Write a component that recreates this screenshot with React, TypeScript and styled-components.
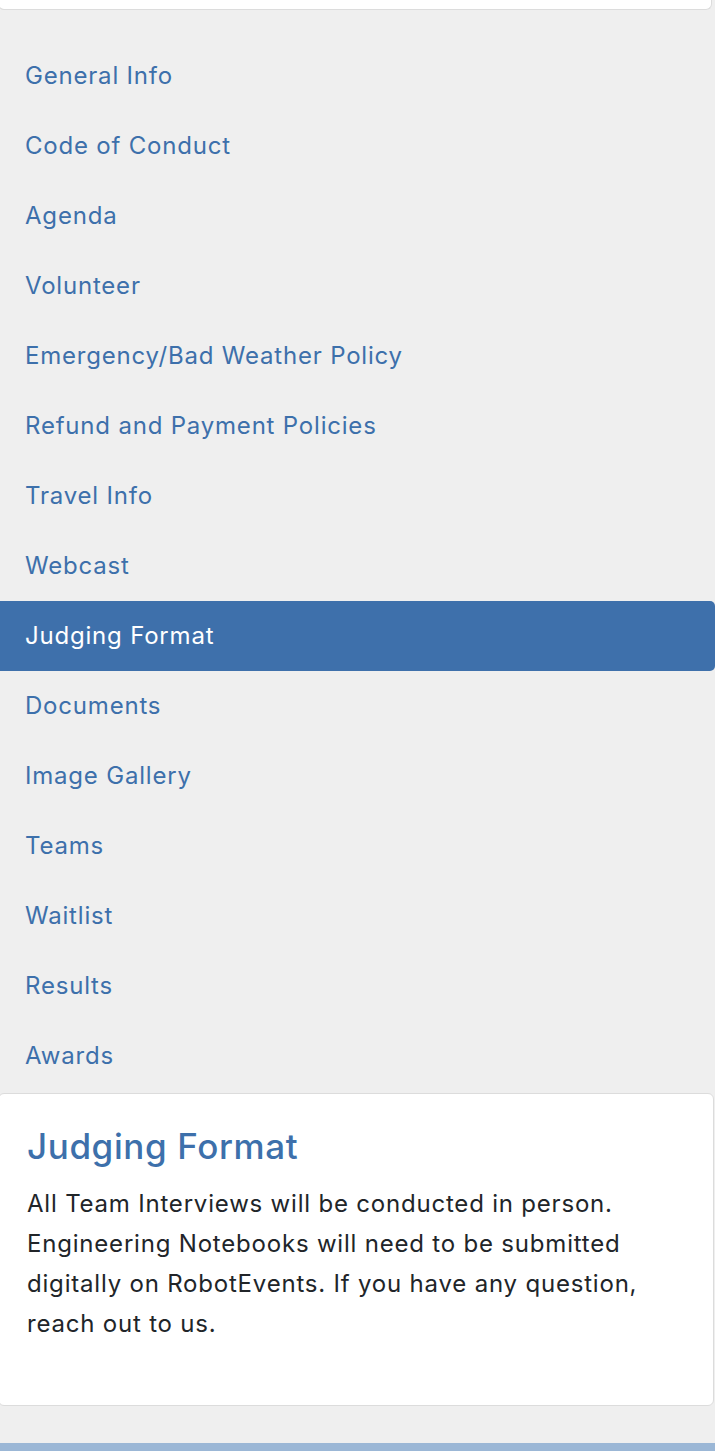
import styled, { createGlobalStyle, css } from 'styled-components';

const GlobalStyle = createGlobalStyle`
    html, body {
        margin: 0;
        padding: 0;
        background: #efefef;
        font-family: Inter, "Open Sans", "Liberation Sans", sans-serif;
    }
    * {
        box-sizing: border-box;
    }
`;

interface InavItemProps {
    active?: boolean;
}

const navItems = [
    'General Info',
    'Code of Conduct',
    'Agenda',
    'Volunteer',
    'Emergency/Bad Weather Policy',
    'Refund and Payment Policies',
    'Travel Info',
    'Webcast',
    'Judging Format',
    'Documents',
    'Image Gallery',
    'Teams',
    'Waitlist',
    'Results',
    'Awards',
];

const App = () => {
    const current = 'Judging Format';

    return (
        <Page>
            <GlobalStyle />
            <TopCard />
            <NavList>
                {navItems.map(item => (
                    <NavItem key={item} active={item === current}>
                        {item}
                    </NavItem>
                ))}
            </NavList>
            <ContentCard>
                <Title>Judging Format</Title>
                <Body>
                    All Team Interviews will be conducted in person.
                    Engineering Notebooks will need to be submitted
                    digitally on RobotEvents. If you have any question,
                    reach out to us.
                </Body>
            </ContentCard>
            <FooterBar />
        </Page>
    );
};

export default App;

const Page = styled.div`
    width: 715px;
    min-height: 1451px;
    background: #efefef;
    display: flex;
    flex-direction: column;
`;

const TopCard = styled.div`
    height: 10px;
    width: 714px;
    margin-left: -2px;
    background: #fff;
    border: 1px solid #dcdcdc;
    border-top: none;
    border-radius: 0 0 6px 6px;
`;

const NavList = styled.nav`
    margin-top: 31px;
    display: flex;
    flex-direction: column;
`;

const NavItem = styled.a<InavItemProps>`
    height: 70px;
    padding: 0 25px 2px;
    display: flex;
    align-items: center;
    font-size: 24px;
    letter-spacing: 0.8px;
    color: #3d70ab;
    text-decoration: none;
    ${props =>
        props.active &&
        css`
            background-color: #3e70ab;
            color: #fff;
            border-radius: 0 5px 5px 0;
        `}
`;

const ContentCard = styled.section`
    margin-top: 2px;
    width: 716px;
    margin-left: -2px;
    height: 313px;
    background: #fff;
    border: 1px solid #dcdcdc;
    border-radius: 6px;
    padding: 28px 26px 0 28px;
`;

const Title = styled.h2`
    margin: 0;
    font-size: 35px;
    font-weight: 500;
    line-height: 48px;
    letter-spacing: 0.6px;
    color: #3d70ab;
`;

const Body = styled.p`
    margin: 14px 0 0;
    font-size: 24px;
    line-height: 40px;
    letter-spacing: 0.8px;
    color: #212529;
    max-width: 660px;
`;

const FooterBar = styled.div`
    margin-top: auto;
    height: 8px;
    background: #9bb7d6;
`;
